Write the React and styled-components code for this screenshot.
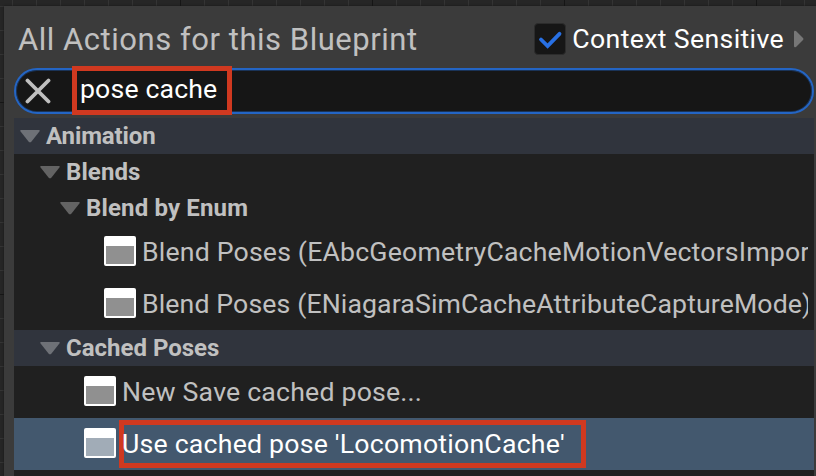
import React from "react";
import styled, { createGlobalStyle } from "styled-components";

const GlobalStyle = createGlobalStyle`
  * { box-sizing: border-box; }
  html, body { margin: 0; padding: 0; overflow: hidden; background: #262626; }
  body { font-family: Roboto, "Liberation Sans", sans-serif; }
`;

const GraphCanvas = styled.main`
  width: 816px;
  height: 476px;
  padding: 6px 0 0 4px;
  overflow: hidden;
  background:
    repeating-linear-gradient(90deg, transparent 0 180px, #161616 180px 181px, transparent 181px 192px),
    repeating-linear-gradient(180deg, transparent 0 102px, #161616 102px 103px, transparent 103px 192px),
    repeating-linear-gradient(90deg, transparent 0 12px, #343434 12px 13px, transparent 13px 24px),
    repeating-linear-gradient(180deg, transparent 0 6px, #343434 6px 7px, transparent 7px 24px),
    #262626;
`;

const Menu = styled.section`
  width: 812px;
  height: 470px;
  padding: 0 2px 0 10px;
  background: #3b3b3b;
  box-shadow: 0 0 2px #161616;
`;

const Header = styled.header`
  display: flex;
  align-items: center;
  height: 62px;
  padding: 4px 9px 0 4px;
`;

const Title = styled.h1`
  flex: 1;
  margin: 0;
  padding-top: 2px;
  font-size: 31px;
  font-weight: 400;
  line-height: 60px;
  letter-spacing: 0.53px;
  white-space: nowrap;
  color: #c0c0c0;
`;

const CheckBox = styled.span`
  width: 32px;
  height: 32px;
  margin-right: 6px;
  border: 1px solid #2c2c2c;
  border-radius: 4px;
  background: #161616;
  svg { display: block; }
`;

const ContextLabel = styled.span`
  margin-right: 9px;
  font-size: 26.67px;
  line-height: 32px;
  letter-spacing: 0.35px;
  white-space: nowrap;
  color: #fff;
`;

const SearchField = styled.div`
  display: flex;
  align-items: center;
  width: 800px;
  height: 46px;
  padding-left: 9px;
  border: 2px solid #2465c4;
  border-radius: 23px;
  background: #161616;
  box-shadow: inset 0 0 0 1px #1a3357;
`;

const SearchMark = styled.div`
  width: 160px;
  height: 49px;
  margin: -2px 0 -1px 21px;
  padding: 3px 0 0 3px;
  border: 5px solid #d03920;
  font-size: 26.67px;
  line-height: 31px;
  letter-spacing: 0.15px;
  white-space: nowrap;
  color: #fff;
`;

const Tree = styled.div`
  height: 358px;
  margin-top: 4px;
  background: #202020;
`;

const CategoryRow = styled.div`
  display: flex;
  align-items: center;
  height: 36px;
  padding-left: ${({ $level }) => 6 + $level * 20}px;
  gap: 6px;
  background: ${({ $shaded }) => ($shaded ? "#30343d" : "transparent")};
  font-size: 24px;
  font-weight: 700;
  letter-spacing: ${({ $tracking }) => $tracking || 0}px;
  white-space: nowrap;
  color: #c0c0c0;
`;

const ActionRow = styled.div`
  display: flex;
  align-items: center;
  height: 52px;
  padding: 0 6px 0 ${({ $level }) => 30 + $level * 20}px;
  gap: 6px;
  background: ${({ $selected }) => ($selected ? "#43586e" : "transparent")};
  color: ${({ $selected }) => ($selected ? "#fff" : "#c0c0c0")};
`;

const ActionLabel = styled.span`
  flex: 1;
  overflow: hidden;
  font-size: 26.67px;
  line-height: 36px;
  letter-spacing: ${({ $tracking }) => $tracking || 0}px;
  white-space: nowrap;
`;

const ActionMark = styled.div`
  flex: none;
  width: 467px;
  height: 48px;
  margin-left: -3px;
  border: 5px solid #d03920;
  font-size: 26.67px;
  line-height: 38px;
  letter-spacing: 0.22px;
  text-indent: -2px;
  white-space: nowrap;
  color: #fff;
`;

const NodeIcon = styled.span`
  flex: none;
  width: 32px;
  height: 30px;
  margin-bottom: 2px;
  border: 2px solid #fff;
  border-top-width: 10px;
  border-radius: 2px;
  background: ${({ $selected }) => ($selected ? "#a1acb7" : "#909090")};
`;

const ExpandArrow = () => (
  <svg width="20" height="14" viewBox="0 0 20 14">
    <path d="M1.2 1H18.8Q20.4 1 19.4 2.4L11.5 12.4Q10 14.2 8.5 12.4L0.6 2.4Q-.4 1 1.2 1Z" fill="#fff" fillOpacity="0.3" />
  </svg>
);

export default function App() {
  return (
    <>
      <GlobalStyle />
      <GraphCanvas>
        <Menu>
          <Header>
            <Title>All Actions for this Blueprint</Title>
            <CheckBox>
              <svg width="30" height="30" viewBox="0 0 30 30">
                <path d="M6 15.5L12.6 22L24.5 9.8" fill="none" stroke="#2870e4" strokeWidth="3.8" strokeLinecap="round" />
              </svg>
            </CheckBox>
            <ContextLabel>Context Sensitive</ContextLabel>
            <svg width="12" height="18" viewBox="0 0 12 18">
              <path d="M1 2Q1 0 3 1L10 8Q11 9 10 10L3 17Q1 18 1 16Z" fill="#777" />
            </svg>
          </Header>
          <SearchField>
            <svg width="26" height="26" viewBox="0 0 26 26">
              <path d="M2.5 2.5L23.5 23.5M23.5 2.5L2.5 23.5" stroke="#c0c0c0" strokeWidth="3.8" strokeLinecap="round" />
            </svg>
            <SearchMark>pose cache</SearchMark>
          </SearchField>
          <Tree>
            <CategoryRow $level={0} $shaded $tracking={-0.12}><ExpandArrow />Animation</CategoryRow>
            <CategoryRow $level={1} $tracking={0.1}><ExpandArrow />Blends</CategoryRow>
            <CategoryRow $level={2} $tracking={0.15}><ExpandArrow />Blend by Enum</CategoryRow>
            <ActionRow $level={3}>
              <NodeIcon />
              <ActionLabel $tracking={0.18}>Blend Poses (EAbcGeometryCacheMotionVectorsImportMode)</ActionLabel>
            </ActionRow>
            <ActionRow $level={3}>
              <NodeIcon />
              <ActionLabel $tracking={0.12}>Blend Poses (ENiagaraSimCacheAttributeCaptureMode)</ActionLabel>
            </ActionRow>
            <CategoryRow $level={1} $shaded><ExpandArrow />Cached Poses</CategoryRow>
            <ActionRow $level={2}>
              <NodeIcon />
              <ActionLabel $tracking={0.2}>New Save cached pose...</ActionLabel>
            </ActionRow>
            <ActionRow $level={2} $selected>
              <NodeIcon $selected />
              <ActionMark>Use cached pose 'LocomotionCache'</ActionMark>
            </ActionRow>
          </Tree>
        </Menu>
      </GraphCanvas>
    </>
  );
}
